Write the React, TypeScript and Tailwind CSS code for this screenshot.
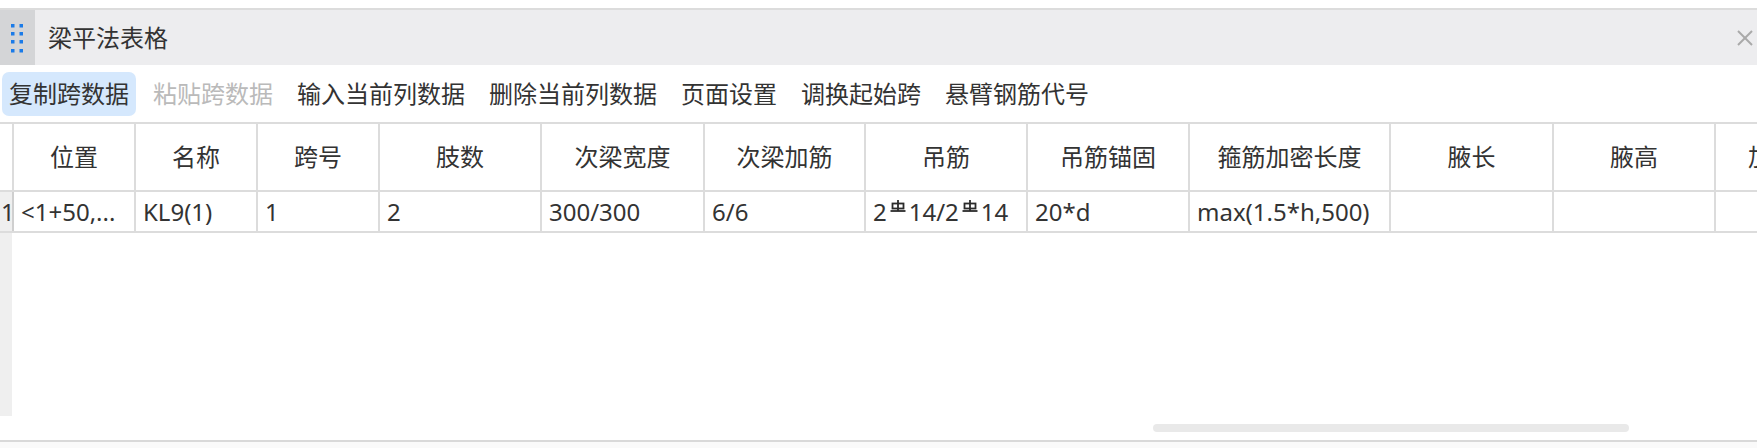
import React from "react";

type Col = { title: string; width: string; value?: React.ReactNode };

function RebarMark() {
  // HRB400 rebar symbol drawn as a tiny glyph
  return (
    <svg width="16" height="12" viewBox="0 0 16 12" className="mx-[3px] mt-[6px] shrink-0">
      <g stroke="#2b2b2b" strokeWidth="1.8" fill="none">
        <line x1="8" y1="0" x2="8" y2="11" />
        <rect x="2.5" y="3.5" width="11" height="5" />
        <line x1="0.5" y1="11" x2="15.5" y2="11" />
      </g>
    </svg>
  );
}

const columns: Col[] = [
  { title: "位置", width: "w-[122px]", value: "<1+50,..." },
  { title: "名称", width: "w-[122px]", value: "KL9(1)" },
  { title: "跨号", width: "w-[122px]", value: "1" },
  { title: "肢数", width: "w-[162px]", value: "2" },
  { title: "次梁宽度", width: "w-[163px]", value: "300/300" },
  { title: "次梁加筋", width: "w-[161px]", value: "6/6" },
  {
    title: "吊筋",
    width: "w-[162px]",
    value: (
      <span className="inline-flex items-start">
        2<RebarMark />
        14/2<RebarMark />
        14
      </span>
    ),
  },
  { title: "吊筋锚固", width: "w-[162px]", value: "20*d" },
  { title: "箍筋加密长度", width: "w-[201px]", value: "max(1.5*h,500)" },
  { title: "腋长", width: "w-[163px]" },
  { title: "腋高", width: "w-[162px]" },
  { title: "加腋钢筋", width: "w-[162px]" },
];

const actions = [
  { label: "复制跨数据", active: true },
  { label: "粘贴跨数据", disabled: true },
  { label: "输入当前列数据" },
  { label: "删除当前列数据" },
  { label: "页面设置" },
  { label: "调换起始跨" },
  { label: "悬臂钢筋代号" },
];

export default function App() {
  return (
    <div className="w-[1757px] h-[448px] bg-white overflow-hidden flex flex-col text-[#333] font-['Noto_Sans','Noto_Sans_CJK_SC',sans-serif]">
      {/* ================= TITLE BAR ================= */}
      <div className="h-[8px] shrink-0" />
      <div className="h-[57px] shrink-0 border-t-2 border-[#dcdcdc] bg-[#ededef] flex items-center">
        <div className="w-[35px] h-full bg-[#d4d5d7] relative shrink-0">
          <svg width="12" height="29" viewBox="0 0 12 29" className="absolute left-[11px] top-[14px]">
            {[0, 8, 16, 25].map((y) => (
              <g key={y} fill="#1a7be8">
                <rect x="0" y={y} width="3.5" height="3.5" />
                <rect x="8.5" y={y} width="3.5" height="3.5" />
              </g>
            ))}
          </svg>
        </div>
        <span className="ml-[13px] text-[24px] leading-none">梁平法表格</span>
        <div className="flex-1" />
        <svg width="16" height="16" viewBox="0 0 16 16" className="mr-[4px]">
          <g stroke="#a9a9a9" strokeWidth="2">
            <line x1="1" y1="1" x2="15" y2="15" />
            <line x1="15" y1="1" x2="1" y2="15" />
          </g>
        </svg>
      </div>

      {/* ================= TOOLBAR ================= */}
      <div className="h-[57px] shrink-0 flex items-start gap-[10px] pl-[2px] pt-[7px]">
        {actions.map((a) => (
          <div
            key={a.label}
            className={
              a.active
                ? "h-[44px] px-[7px] flex items-center rounded-[7px] bg-[#d5e8fd] text-[24px] whitespace-nowrap"
                : a.disabled
                ? "h-[44px] px-[7px] flex items-center text-[24px] text-[#bababa] whitespace-nowrap"
                : "h-[44px] px-[7px] flex items-center text-[24px] whitespace-nowrap"
            }
          >
            {a.label}
          </div>
        ))}
      </div>

      {/* ================= TABLE ================= */}
      <div className="flex-1 flex flex-col min-h-0">
        {/* header */}
        <div className="flex h-[70px] shrink-0 border-y-2 border-[#dcdcdc]">
          <div className="w-[14px] shrink-0 border-r-2 border-[#dcdcdc]" />
          {columns.map((c) => (
            <div
              key={c.title}
              className={`${c.width} shrink-0 border-r-2 border-[#dcdcdc] flex items-center justify-center text-[24px] whitespace-nowrap overflow-hidden`}
            >
              {c.title}
            </div>
          ))}
        </div>
        {/* data row */}
        <div className="flex h-[41px] shrink-0 border-b-2 border-[#dcdcdc]">
          <div className="w-[14px] shrink-0 border-r-2 border-[#cfcfcf] bg-[#efefef] text-[24px] leading-[39px] pl-[1px] overflow-hidden">
            1
          </div>
          {columns.map((c) => (
            <div
              key={c.title}
              className={`${c.width} shrink-0 border-r-2 border-[#dcdcdc] flex items-center pl-[7px] text-[24px] whitespace-nowrap overflow-hidden`}
            >
              {c.value}
            </div>
          ))}
        </div>
        {/* empty area */}
        <div className="h-[183px] shrink-0 flex">
          <div className="w-[12px] bg-[#efefef]" />
        </div>
        {/* horizontal scrollbar */}
        <div className="h-[24px] shrink-0 pt-[8px] pl-[1153px]">
          <div className="w-[476px] h-[8px] rounded-full bg-[#e9e9e9]" />
        </div>
      </div>

      {/* ================= FOOTER ================= */}
      <div className="h-[8px] shrink-0 border-t-2 border-[#d9d9d9] bg-[#fafafa]" />
    </div>
  );
}
